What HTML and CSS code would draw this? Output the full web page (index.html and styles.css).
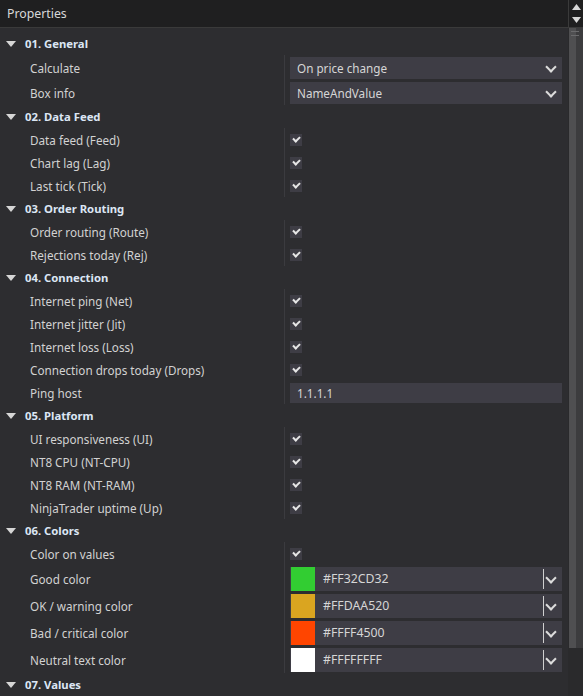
FILE: index.html
```html
<!DOCTYPE html>
<html>
<head>
    <title>Properties</title>
    <link rel="stylesheet" href="styles.css">
</head>
<body>
    <div class="panel">
        <div class="panel-header">
            <span class="panel-title">Properties</span>
            <div class="sort-arrows">
                <svg width="9" height="6" viewBox="0 0 9 6"><path d="M4.5 0 L9 6 L0 6 Z" fill="#d8d8d8"/></svg>
                <svg width="9" height="6" viewBox="0 0 9 6"><path d="M0 0 L9 0 L4.5 6 Z" fill="#d8d8d8"/></svg>
            </div>
        </div>

        <div class="panel-body">
            <div class="grid">
                <!-- 01 -->
                <div class="section"><span class="caret"></span>01. General</div>
                <div class="row tall">
                    <div class="name">Calculate</div>
                    <div class="value"><div class="select">On price change<span class="chev"></span></div></div>
                </div>
                <div class="row tall">
                    <div class="name">Box info</div>
                    <div class="value"><div class="select">NameAndValue<span class="chev"></span></div></div>
                </div>

                <!-- 02 -->
                <div class="section"><span class="caret"></span>02. Data Feed</div>
                <div class="row"><div class="name">Data feed (Feed)</div><div class="value"><span class="check"></span></div></div>
                <div class="row"><div class="name">Chart lag (Lag)</div><div class="value"><span class="check"></span></div></div>
                <div class="row"><div class="name">Last tick (Tick)</div><div class="value"><span class="check"></span></div></div>

                <!-- 03 -->
                <div class="section"><span class="caret"></span>03. Order Routing</div>
                <div class="row"><div class="name">Order routing (Route)</div><div class="value"><span class="check"></span></div></div>
                <div class="row"><div class="name">Rejections today (Rej)</div><div class="value"><span class="check"></span></div></div>

                <!-- 04 -->
                <div class="section"><span class="caret"></span>04. Connection</div>
                <div class="row"><div class="name">Internet ping (Net)</div><div class="value"><span class="check"></span></div></div>
                <div class="row"><div class="name">Internet jitter (Jit)</div><div class="value"><span class="check"></span></div></div>
                <div class="row"><div class="name">Internet loss (Loss)</div><div class="value"><span class="check"></span></div></div>
                <div class="row"><div class="name">Connection drops today (Drops)</div><div class="value"><span class="check"></span></div></div>
                <div class="row">
                    <div class="name">Ping host</div>
                    <div class="value"><div class="textbox">1.1.1.1</div></div>
                </div>

                <!-- 05 -->
                <div class="section"><span class="caret"></span>05. Platform</div>
                <div class="row"><div class="name">UI responsiveness (UI)</div><div class="value"><span class="check"></span></div></div>
                <div class="row"><div class="name">NT8 CPU (NT-CPU)</div><div class="value"><span class="check"></span></div></div>
                <div class="row"><div class="name">NT8 RAM (NT-RAM)</div><div class="value"><span class="check"></span></div></div>
                <div class="row"><div class="name">NinjaTrader uptime (Up)</div><div class="value"><span class="check"></span></div></div>

                <!-- 06 -->
                <div class="section"><span class="caret"></span>06. Colors</div>
                <div class="row"><div class="name">Color on values</div><div class="value"><span class="check"></span></div></div>
                <div class="row color-row">
                    <div class="name">Good color</div>
                    <div class="value"><div class="color-box"><span class="swatch" style="background:#32cd32"></span><span class="hex">#FF32CD32</span><span class="sep"></span><span class="chev"></span></div></div>
                </div>
                <div class="row color-row">
                    <div class="name">OK / warning color</div>
                    <div class="value"><div class="color-box"><span class="swatch" style="background:#daa520"></span><span class="hex">#FFDAA520</span><span class="sep"></span><span class="chev"></span></div></div>
                </div>
                <div class="row color-row">
                    <div class="name">Bad / critical color</div>
                    <div class="value"><div class="color-box"><span class="swatch" style="background:#ff4500"></span><span class="hex">#FFFF4500</span><span class="sep"></span><span class="chev"></span></div></div>
                </div>
                <div class="row color-row">
                    <div class="name">Neutral text color</div>
                    <div class="value"><div class="color-box"><span class="swatch" style="background:#ffffff"></span><span class="hex">#FFFFFFFF</span><span class="sep"></span><span class="chev"></span></div></div>
                </div>

                <!-- 07 -->
                <div class="section"><span class="caret"></span>07. Values</div>
            </div>

            <div class="scrollbar">
                <div class="thumb"><span class="grip"></span></div>
            </div>
        </div>
    </div>
</body>
</html>
```

FILE: styles.css
```css
:root {
    --bg: #2d2d30;
    --header-bg: #1f1f20;
    --field-bg: #3e3d45;
    --text: #d2d2d2;
    --section-text: #dce6f4;
    --divider: #3b3b3f;
}

html, body { margin: 0; padding: 0; }

body {
    background: var(--bg);
    color: var(--text);
    font-family: "Noto Sans", "Open Sans", sans-serif;
    font-size: 11.7px;
    width: 583px;
    height: 696px;
    overflow: hidden;
}

.panel { display: flex; flex-direction: column; height: 696px; }

.panel-header {
    height: 27px;
    background: var(--header-bg);
    border-bottom: 1px solid #3a3a3a;
    display: flex;
    align-items: center;
    justify-content: space-between;
    flex-shrink: 0;
}
.panel-title { padding-left: 7px; font-size: 12.3px; color: #d8d8d8; }
.sort-arrows {
    width: 14px;
    height: 27px;
    border-left: 1px solid #3a3a3a;
    display: flex;
    flex-direction: column;
    align-items: center;
    justify-content: center;
    gap: 7px;
}
.sort-arrows svg { display: block; }

.panel-body { display: flex; flex: 1; min-height: 0; }
.grid { width: 568px; padding-top: 4px; }

.section {
    height: 23px;
    display: flex;
    align-items: center;
    font-weight: bold;
    font-size: 11.3px;
    color: var(--section-text);
}
.caret {
    width: 0; height: 0;
    border-left: 5px solid transparent;
    border-right: 5px solid transparent;
    border-top: 6px solid #d6d6d6;
    margin: 0 9px 0 6px;
}

.row { display: flex; height: 23px; }
.row.tall { height: 25px; }
.row.color-row { height: 27px; }

.name {
    width: 284px;
    padding-left: 30px;
    box-sizing: border-box;
    display: flex;
    align-items: center;
    white-space: nowrap;
}
.value {
    flex: 1;
    border-left: 1px solid var(--divider);
    padding: 0 6px 0 5px;
    display: flex;
    align-items: center;
}

.check {
    width: 12px;
    height: 12px;
    background: var(--field-bg);
    position: relative;
}
.check::after {
    content: "";
    position: absolute;
    left: 3px; top: 2px;
    width: 5px; height: 3px;
    border-left: 2px solid #e6e6e6;
    border-bottom: 2px solid #e6e6e6;
    transform: rotate(-45deg);
}

.select {
    flex: 1;
    height: 22px;
    margin-top: 1px;
    background: var(--field-bg);
    display: flex;
    align-items: center;
    padding-left: 7px;
    position: relative;
    color: #d6d6d6;
}
.chev {
    position: absolute;
    right: 7px;
    top: 50%;
    width: 6px; height: 6px;
    margin-top: -5px;
    border-right: 2px solid #dcdcdc;
    border-bottom: 2px solid #dcdcdc;
    transform: rotate(45deg);
}

.textbox {
    flex: 1;
    height: 20px;
    background: var(--field-bg);
    display: flex;
    align-items: center;
    padding-left: 7px;
    color: #d6d6d6;
}

.color-box {
    flex: 1;
    height: 24px;
    background: var(--field-bg);
    display: flex;
    align-items: center;
    position: relative;
    padding-left: 1px;
}
.swatch { width: 24px; height: 24px; }
.hex { padding-left: 8px; color: #d6d6d6; font-size: 12.3px; }
.sep {
    position: absolute;
    right: 18px;
    top: 2px; bottom: 2px;
    width: 1px;
    background: #cfcfcf;
}

.scrollbar {
    width: 15px;
    background: #2a2a2c;
    position: relative;
}
.thumb {
    height: 620px;
    margin-left: 1px;
    background: linear-gradient(to right, #4f4f51 0, #4f4f51 7px, #3c3c3e 7px);
    position: relative;
}
.grip {
    position: absolute;
    left: 2px; top: 3px;
    width: 8px; height: 3px;
    border-top: 1px solid #6a6a6c;
    border-bottom: 1px solid #6a6a6c;
}
```
